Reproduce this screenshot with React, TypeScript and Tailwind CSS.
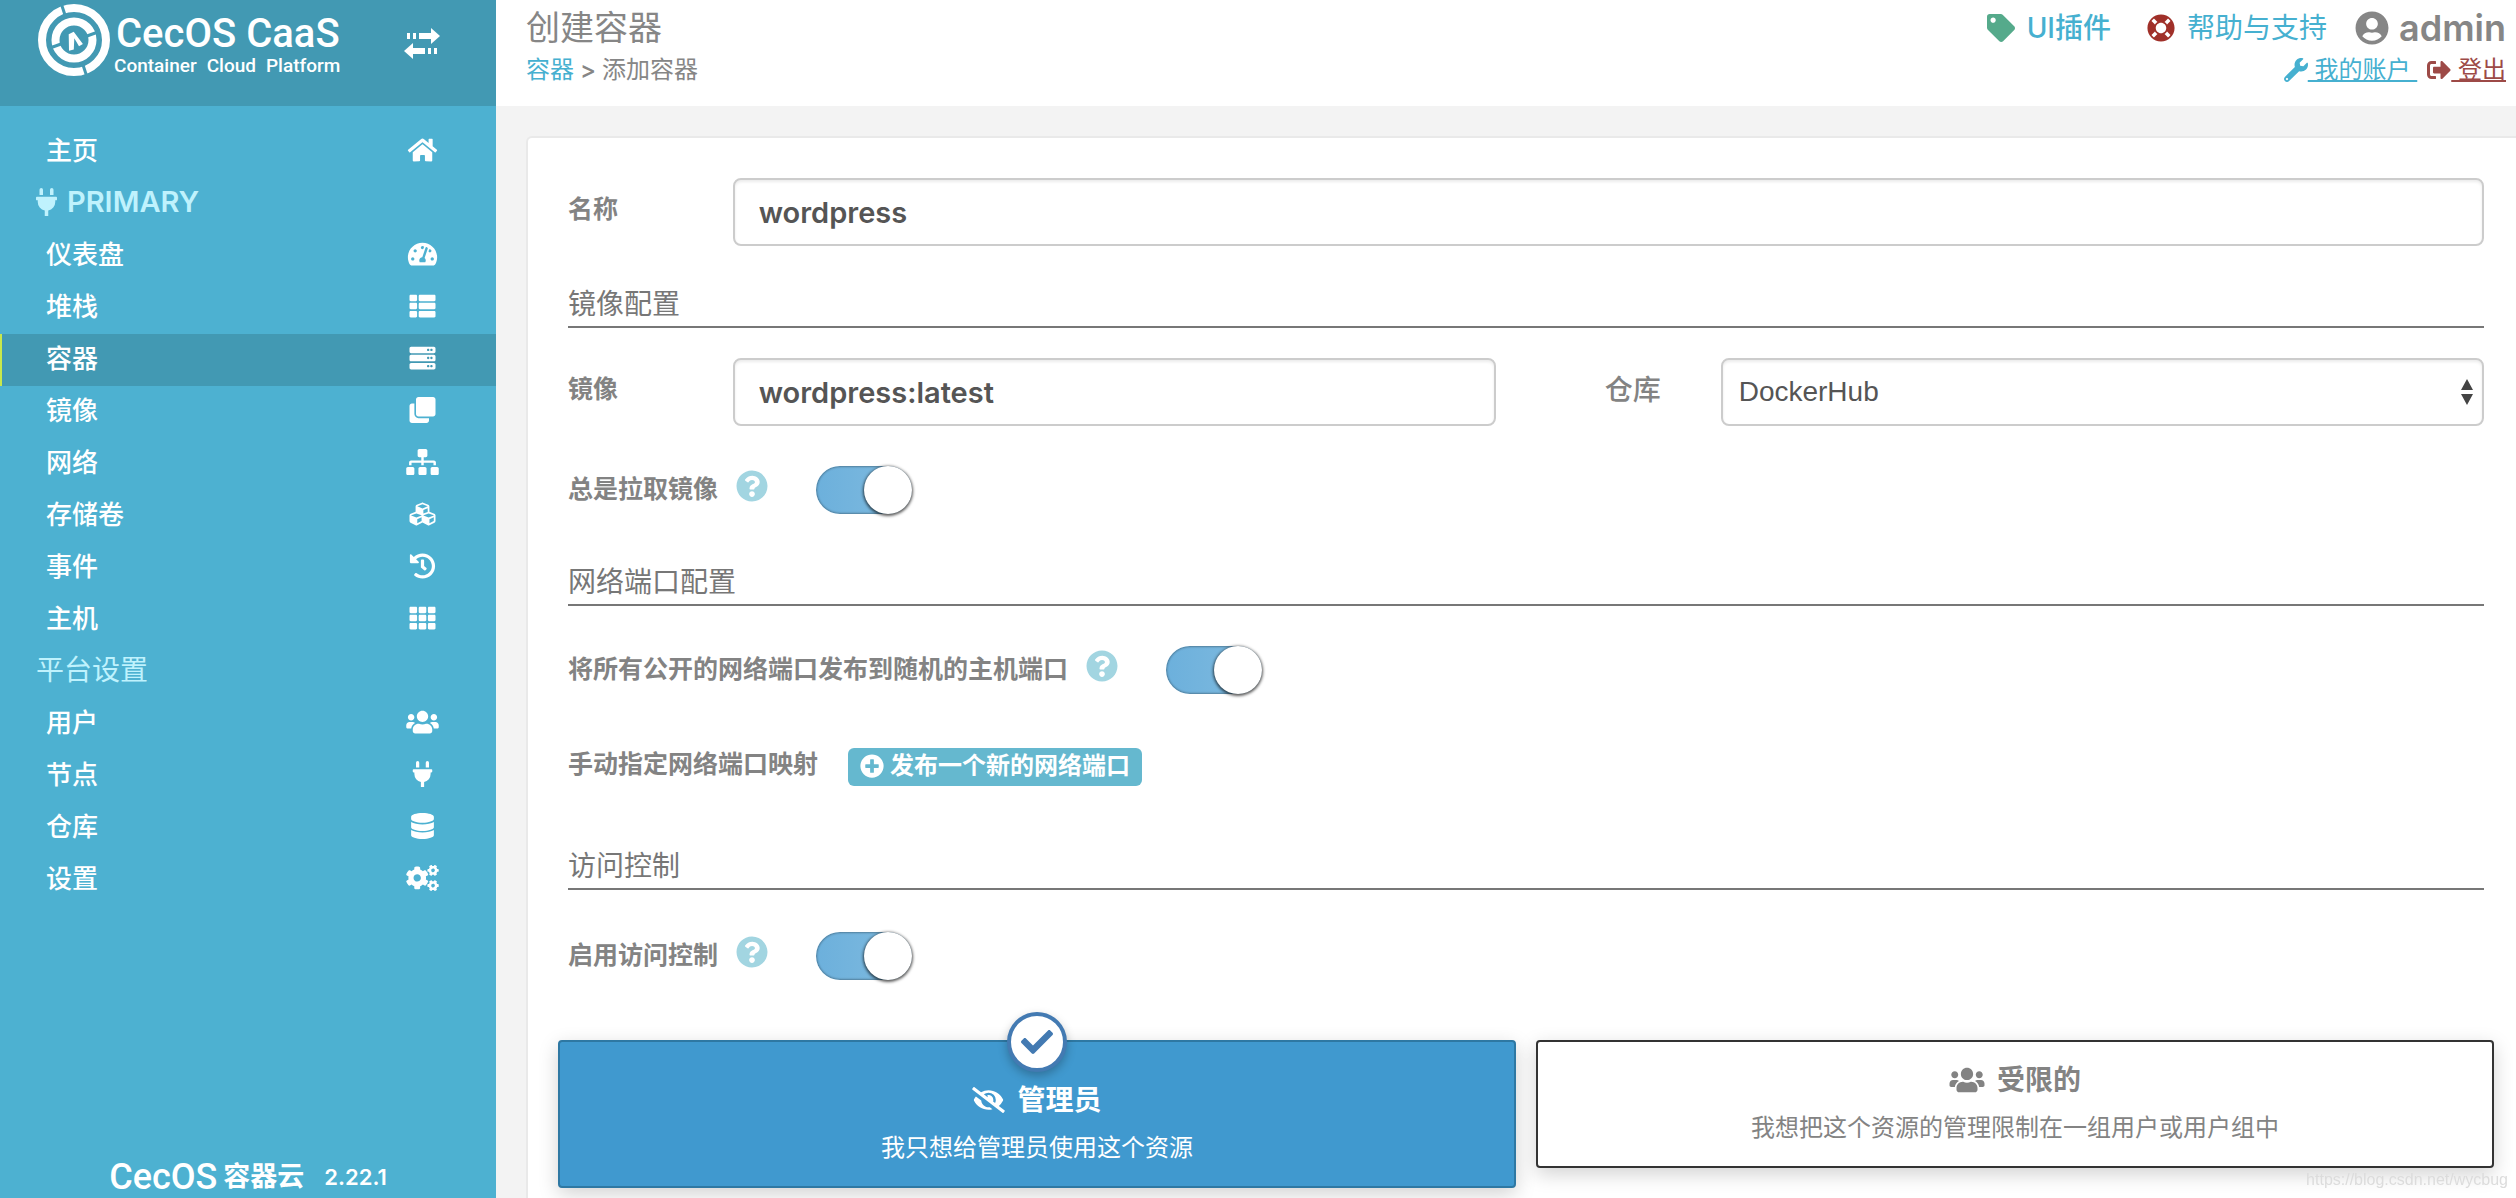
import { useState } from 'react';
import type { ReactNode } from 'react';
import {
  FaCheck,
  FaClone,
  FaCogs,
  FaCubes,
  FaDatabase,
  FaEyeSlash,
  FaHistory,
  FaHome,
  FaLifeRing,
  FaPlug,
  FaPlusCircle,
  FaQuestionCircle,
  FaServer,
  FaSignOutAlt,
  FaSitemap,
  FaTachometerAlt,
  FaTag,
  FaTh,
  FaThList,
  FaUserCircle,
  FaUsers,
  FaWrench,
} from 'react-icons/fa';
import type { IconType } from 'react-icons';

type NavItem = { label: string; icon: IconType; active?: boolean };

const primaryItems: NavItem[] = [
  { label: '仪表盘', icon: FaTachometerAlt },
  { label: '堆栈', icon: FaThList },
  { label: '容器', icon: FaServer, active: true },
  { label: '镜像', icon: FaClone },
  { label: '网络', icon: FaSitemap },
  { label: '存储卷', icon: FaCubes },
  { label: '事件', icon: FaHistory },
  { label: '主机', icon: FaTh },
];

const settingsItems: NavItem[] = [
  { label: '用户', icon: FaUsers },
  { label: '节点', icon: FaPlug },
  { label: '仓库', icon: FaDatabase },
  { label: '设置', icon: FaCogs },
];

const Logo = () => (
  <svg viewBox="0 0 72 72" className="size-[72px]" aria-hidden="true">
    <circle cx="36" cy="36" r="32" fill="none" stroke="#fff" strokeWidth="8" />
    <circle cx="36" cy="36" r="18.5" fill="none" stroke="#fff" strokeWidth="8" />
    <g stroke="#4299b3" strokeWidth="3">
      <path d="M23 -1 L28 14" />
      <path d="M44 58 L49 73" />
      <path d="M49 32 L60 28" />
      <path d="M12 44 L23 40" />
    </g>
    <path fill="#fff" d="M30.7 30.3 L35.7 27.7 L44.9 40 L41 42.2 L36.3 34.3 L35.8 45.5 L31 46.7 Z" />
  </svg>
);

const TransferIcon = () => (
  <svg viewBox="0 0 36 32" className="h-8 w-9" fill="currentColor" aria-hidden="true">
    <path d="M3 5h3v6H3zM9 5h3v6H9zM15 5h12V0l9 8-9 8v-5H15z" />
    <path d="M33 20h-3v6h3zM27 20h-3v6h3zM21 20H9v-5l-9 8 9 8v-5h12z" />
  </svg>
);

const NavLink = ({ item }: { item: NavItem }) => {
  const Icon = item.icon;
  return (
    <li>
      <a
        href="#"
        className={`flex h-13 items-center justify-between border-l-2 pr-[42px] pb-1 pl-11 text-[26px] font-medium text-white ${
          item.active ? 'border-[#c8e84c] bg-[#4299b3]' : 'border-transparent'
        }`}
      >
        {item.label}
        <span className="flex w-16 justify-center">
          <Icon className="h-[26px] w-[33px]" />
        </span>
      </a>
    </li>
  );
};

const NavTitle = ({ children }: { children: ReactNode }) => (
  <li className="flex h-13 items-center gap-2.5 pb-1 pl-9 text-[28px] text-[#bff2fd]">{children}</li>
);

const Sidebar = () => (
  <aside className="flex w-[496px] shrink-0 flex-col bg-[#4db1d1] text-white">
    <div className="flex h-[106px] shrink-0 items-start justify-between bg-[#4299b3] pl-[38px] pr-14">
      <div className="flex items-start gap-1 pt-1">
        <Logo />
        <div className="flex flex-col pt-2 font-['Roboto','Liberation_Sans',sans-serif]">
          <span className="pl-0.5 text-[40px] leading-11 font-medium">CecOS CaaS</span>
          <span className="flex gap-2.5 text-[19px] leading-5 font-medium">
            <span>Container</span>
            <span>Cloud</span>
            <span>Platform</span>
          </span>
        </div>
      </div>
      <button type="button" aria-label="切换菜单" className="pt-7">
        <TransferIcon />
      </button>
    </div>
    <nav className="flex-1 pt-5">
      <ul>
        <NavLink item={{ label: '主页', icon: FaHome }} />
        <NavTitle>
          <FaPlug className="h-7 w-[21px]" />
          <span className="text-[29px] font-semibold">PRIMARY</span>
        </NavTitle>
        {primaryItems.map((item) => (
          <NavLink key={item.label} item={item} />
        ))}
        <NavTitle>平台设置</NavTitle>
        {settingsItems.map((item) => (
          <NavLink key={item.label} item={item} />
        ))}
      </ul>
    </nav>
    <footer className="flex items-center justify-center gap-5 leading-[42px]">
      <span className="flex items-center gap-1.5">
        <span className="font-['Roboto','Liberation_Sans',sans-serif] text-[36px] font-medium">CecOS</span>
        <span className="text-[27px] font-bold">容器云</span>
      </span>
      <span className="text-[22px] font-semibold">2.22.1</span>
    </footer>
  </aside>
);

const TopBar = () => (
  <header className="flex h-[106px] shrink-0 justify-between bg-white pl-[30px] pr-2.5 text-[#868686]">
    <div>
      <h1 className="pt-1 text-[34px] leading-12">创建容器</h1>
      <div className="flex gap-1.5 text-[24px] leading-9">
        <a href="#" className="text-[#46b0d0]">容器</a>
        <span className="font-medium">&gt;</span>
        <span>添加容器</span>
      </div>
    </div>
    <div className="flex flex-col items-end pt-1">
      <div className="flex h-12 items-center text-[28px]">
        <a href="#" className="flex items-center gap-3 text-[#46b0d0]">
          <FaTag className="size-7 text-[#55aa8b]" />
          <span className="font-medium">UI插件</span>
        </a>
        <a href="#" className="ml-9 flex items-center gap-3 text-[#46b0d0]">
          <FaLifeRing className="size-7 text-[#a03029]" />
          帮助与支持
        </a>
        <span className="ml-7 flex items-center gap-2.5 text-[36px] font-semibold">
          <FaUserCircle className="size-[34px]" />
          admin
        </span>
      </div>
      <div className="flex h-9 items-center gap-2.5 text-[24px]">
        <a href="#" className="flex items-center text-[#46b0d0]">
          <FaWrench className="size-6" />
          <span className="whitespace-pre underline underline-offset-2"> 我的账户 </span>
        </a>
        <a href="#" className="flex items-center text-[#9d4a47]">
          <FaSignOutAlt className="size-6" />
          <span className="whitespace-pre underline underline-offset-2"> 登出</span>
        </a>
      </div>
    </div>
  </header>
);

const SectionTitle = ({ className, children }: { className: string; children: ReactNode }) => (
  <h2 className={`border-b-2 border-[#777] pb-0.5 text-[28px] leading-10 text-[#777] ${className}`}>{children}</h2>
);

type SwitchRowProps = { id: string; label: string; className: string };

const SwitchRow = ({ id, label, className }: SwitchRowProps) => {
  const [on, setOn] = useState(true);
  return (
    <div className={`flex h-12 items-center ${className}`}>
      <label htmlFor={id} className="text-[25px] font-bold">{label}</label>
      <FaQuestionCircle className="mr-12 mb-2 ml-[18px] size-8 text-[#a2d5e1]" />
      <input
        id={id}
        type="checkbox"
        checked={on}
        onChange={(e) => setOn(e.target.checked)}
        className="flex h-12 w-24 appearance-none items-center rounded-full bg-gray-200 shadow-[inset_0_0_2px_1px_rgba(0,0,0,0.3)] before:size-12 before:shrink-0 before:rounded-full before:bg-white before:shadow-[0_1px_3px_1px_rgba(0,0,0,0.65)] before:content-[''] checked:justify-end checked:bg-linear-to-r checked:from-[#6cb0dc] checked:to-[#80bbdf]"
      />
    </div>
  );
};

const fieldClass =
  'h-[68px] w-full rounded-lg border-2 border-[#ccc] bg-white text-[#555] shadow-[inset_0_2px_3px_rgba(0,0,0,0.08)] outline-none';

const AccessOptions = () => {
  const cardClass =
    'relative flex flex-col items-center rounded-sm border-2 pb-5 shadow-[0_6px_20px_rgba(0,0,0,0.18)]';
  return (
    <div className="-mx-2.5 mt-15 grid grid-cols-2 items-start gap-5">
      <button type="button" className={`${cardClass} border-[#2e78a3] bg-[#4099cf] pt-[38px] text-white`}>
        <span className="absolute -top-[30px] flex size-15 items-center justify-center rounded-full border-4 border-[#437ab2] bg-white text-[#437ab2] shadow-[0_4px_10px_rgba(0,0,0,0.25)]">
          <FaCheck className="size-8" />
        </span>
        <span className="flex items-center gap-3 text-[28px] leading-10 font-bold">
          <FaEyeSlash className="h-[26px] w-[33px]" />
          管理员
        </span>
        <span className="mt-2.5 text-[24px] leading-9">我只想给管理员使用这个资源</span>
      </button>
      <button type="button" className={`${cardClass} border-[#333] bg-white pt-[18px]`}>
        <span className="flex items-center gap-3 text-[28px] leading-10 font-bold">
          <FaUsers className="h-7 w-9" />
          受限的
        </span>
        <span className="mt-2.5 text-[24px] leading-9">我想把这个资源的管理限制在一组用户或用户组中</span>
      </button>
    </div>
  );
};

const CreateContainerForm = () => (
  <form className="flex-1 rounded-tl-md border-t-2 border-l-2 border-[#e9e9e9] bg-white pt-10 pr-8 pl-10 text-[#838383]">
    <div className="grid grid-cols-12 items-center gap-x-15">
      <label htmlFor="name" className="pb-1 text-[25px] font-bold">名称</label>
      <div className="col-span-11">
        <input id="name" type="text" defaultValue="wordpress" className={`${fieldClass} px-6 text-[29px] font-semibold`} />
      </div>
    </div>

    <SectionTitle className="mt-[38px]">镜像配置</SectionTitle>
    <div className="mt-[30px] grid grid-cols-12 items-center gap-x-15">
      <label htmlFor="image" className="pb-1 text-[25px] font-bold">镜像</label>
      <div className="col-span-5">
        <input id="image" type="text" defaultValue="wordpress:latest" className={`${fieldClass} px-6 text-[29px] font-semibold`} />
      </div>
      <label htmlFor="registry" className="pb-1 text-right text-[28px] font-medium">仓库</label>
      <div className="relative col-span-5">
        <select
          id="registry"
          className={`${fieldClass} appearance-none px-4 font-['Liberation_Sans',sans-serif] text-[28px]`}
        >
          <option>DockerHub</option>
        </select>
        <svg viewBox="0 0 12 26" className="pointer-events-none absolute top-[21px] right-[11px] h-[26px] w-3" fill="#444" aria-hidden="true">
          <path d="M6 0l6 11H0zM6 26l6-11H0z" />
        </svg>
      </div>
    </div>
    <SwitchRow id="always-pull" label="总是拉取镜像" className="mt-10" />

    <SectionTitle className="mt-12">网络端口配置</SectionTitle>
    <SwitchRow id="publish-all" label="将所有公开的网络端口发布到随机的主机端口" className="mt-10" />
    <div className="mt-[54px] flex h-[38px] items-center gap-[30px]">
      <span className="pb-1 text-[25px] font-bold">手动指定网络端口映射</span>
      <button
        type="button"
        className="flex h-full items-center gap-1.5 rounded-md bg-[#65b8cf] px-3 pb-0.5 text-[24px] font-bold text-white"
      >
        <FaPlusCircle className="size-6" />
        发布一个新的网络端口
      </button>
    </div>

    <SectionTitle className="mt-15">访问控制</SectionTitle>
    <SwitchRow id="access-control" label="启用访问控制" className="mt-[42px]" />
    <AccessOptions />
  </form>
);

export default function App() {
  return (
    <div className="flex h-screen overflow-hidden bg-[#f3f3f3] font-['Inter','Noto_Sans_CJK_SC',sans-serif]">
      <Sidebar />
      <div className="flex min-w-0 flex-1 flex-col">
        <TopBar />
        <main className="flex flex-1 flex-col pt-[30px] pl-[30px]">
          <CreateContainerForm />
        </main>
      </div>
      <span className="pointer-events-none fixed right-2 bottom-2 font-['Liberation_Sans',sans-serif] text-[16px] leading-5 text-[#dcdcdc]">
        https://blog.csdn.net/wycbug
      </span>
    </div>
  );
}
